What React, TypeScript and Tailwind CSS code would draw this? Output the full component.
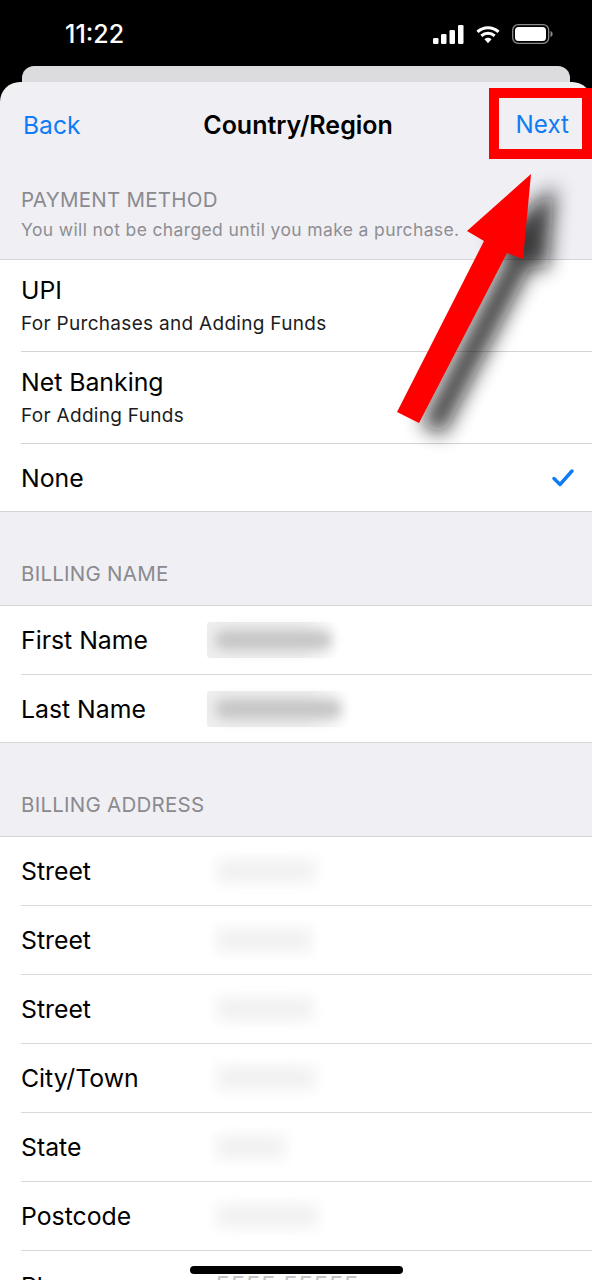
const FONT = "font-['Inter','Noto_Sans',sans-serif]"

function Blurred({ width, light }: { width: number; light?: boolean }) {
  if (light) {
    return (
      <div className="relative h-[34px] rounded-[6px] bg-[#fcfcfc] blur-[3px]" style={{ width }}>
        <div className="absolute inset-x-[6px] inset-y-[8px] rounded-full bg-[#efefef] blur-[6px]" />
      </div>
    )
  }
  return (
    <div className="relative h-[36px] rounded-[3px] bg-gradient-to-r from-[#eeeeee] from-70% to-white" style={{ width }}>
      <div className="absolute inset-x-[8px] inset-y-[8px] rounded-full bg-[#c6c6c6] blur-[6px]" />
    </div>
  )
}

function SectionHeader({ title, sub }: { title: string; sub?: string }) {
  return (
    <div className="px-[21px] border-b border-[#d4d4d8]">
      <div className="text-[20.5px] leading-[26px] text-[#8a8a8f] tracking-[0.25px]">{title}</div>
      {sub && <div className="mt-[6px] pb-[18px] text-[17.5px] leading-[22px] text-[#8e8e93] tracking-[0.37px]">{sub}</div>}
    </div>
  )
}

function DetailRow({ title, sub, checked, last }: { title: string; sub?: string; checked?: boolean; last?: boolean }) {
  return (
    <div className={`flex pl-[21px] bg-white ${sub ? 'h-[92px]' : 'h-[68px]'}`}>
      <div className={`flex-1 flex items-center justify-between pr-[18px] ${last ? 'border-b border-[#d4d4d8] -ml-[21px] pl-[21px]' : 'border-b border-[#d4d4d8]'}`}>
        <div className={sub ? '-mt-[2px]' : ''}>
          <div className="text-[24.8px] leading-[32px] text-black">{title}</div>
          {sub && <div className="mt-[6px] text-[19px] leading-[24px] text-[#1c1c1e] tracking-[0.3px]">{sub}</div>}
        </div>
        {checked && (
          <svg width="22" height="18" viewBox="0 0 22 18" fill="none">
            <path d="M2 9.5 L8 15.5 L20 2" stroke="#0f7cf5" strokeWidth="3.4" strokeLinecap="round" strokeLinejoin="round" />
          </svg>
        )}
      </div>
    </div>
  )
}

function FieldRow({ label, width, dark, last }: { label: string; width: number; dark?: boolean; last?: boolean }) {
  return (
    <div className={`flex bg-white ${last ? 'h-[68px]' : 'h-[69px] pl-[21px]'}`}>
      <div className={`flex-1 flex items-center border-b border-[#d9d9dc] ${last ? 'pl-[21px]' : ''}`}>
        <div className="w-[186px] text-[24.8px] leading-[32px] text-black">{label}</div>
        {dark ? (
          <Blurred width={width} />
        ) : (
          <div className="ml-[5px]">
            <Blurred width={width} light />
          </div>
        )}
      </div>
    </div>
  )
}

function StatusIcons() {
  return (
    <div className="flex items-center gap-[12px]">
      <svg width="31" height="19" viewBox="0 0 31 19" fill="white">
        <rect x="0" y="13" width="5.5" height="6" rx="1.3" />
        <rect x="8" y="9" width="5.5" height="10" rx="1.3" />
        <rect x="16.5" y="5" width="5.5" height="14" rx="1.3" />
        <rect x="25" y="0" width="5.5" height="19" rx="1.3" />
      </svg>
      <svg width="24" height="19" viewBox="0 0 25 19" fill="none" stroke="white" strokeWidth="3.2">
        <path d="M1.5 6.8 A16 16 0 0 1 23.5 6.8" />
        <path d="M5.6 11 A10 10 0 0 1 19.4 11" />
        <path d="M12.5 18.5 L8.8 14.4 A5.4 5.4 0 0 1 16.2 14.4 Z" fill="white" stroke="none" />
      </svg>
      <svg width="41" height="20" viewBox="0 0 41 20" fill="none">
        <rect x="0.7" y="0.7" width="36" height="18.6" rx="5.5" stroke="#8a8a8a" strokeWidth="1.3" />
        <rect x="3" y="3" width="31" height="14" rx="3.5" fill="white" />
        <path d="M38.5 7 C40 7.6 40.6 8.6 40.6 10 C40.6 11.4 40 12.4 38.5 13 Z" fill="#8a8a8a" />
      </svg>
    </div>
  )
}

function ArrowOverlay() {
  const points = '531,174 467,231 484,241 397,412 419,423 507,253 523,259'
  return (
    <svg className="absolute left-0 top-0 pointer-events-none" width="592" height="480" viewBox="0 0 592 480">
      <defs>
        <filter id="arrowBlur" x="-30%" y="-30%" width="160%" height="160%">
          <feGaussianBlur stdDeviation="10" />
        </filter>
      </defs>
      <polygon points={points} transform="translate(24 12)" fill="#111" opacity="0.8" filter="url(#arrowBlur)" />
      <polygon points={points} fill="#ff0000" />
    </svg>
  )
}

export default function App() {
  return (
    <div className={`relative w-[592px] h-[1280px] overflow-hidden bg-black ${FONT}`}>
      {/* Status bar */}
      <div className="h-[66px] flex items-start justify-between pl-[65px] pr-[39px] pt-[18px]">
        <span className="text-[25px] leading-[32px] font-medium text-white">11:22</span>
        <div className="pt-[6px]">
          <StatusIcons />
        </div>
      </div>

      {/* Card behind the sheet */}
      <div className="mx-[22px] h-[16px] rounded-t-[12px] bg-[#dcdcde]" />

      {/* Sheet */}
      <div className="bg-[#f0eff4] rounded-t-[20px] h-[1198px]">
        <div className="relative h-[86px] flex items-center justify-between pl-[23px] pr-[23px]">
          <span className="text-[24.6px] leading-[32px] text-[#0f7cf5]">Back</span>
          <span className="text-[25px] leading-[32px] font-semibold text-black">Country/Region</span>
          <span className="text-[24.2px] leading-[32px] text-[#0f7cf5]">Next</span>
        </div>

        <div className="pt-[19px]">
          <SectionHeader title="PAYMENT METHOD" sub="You will not be charged until you make a purchase." />
        </div>
        <DetailRow title="UPI" sub="For Purchases and Adding Funds" />
        <DetailRow title="Net Banking" sub="For Adding Funds" />
        <DetailRow title="None" checked last />

        <div className="pt-[49px] pb-[18px]">
          <div className="px-[21px] text-[20.5px] leading-[26px] text-[#8a8a8f] tracking-[0.25px]">BILLING NAME</div>
        </div>
        <div className="border-t border-[#d4d4d8]">
          <FieldRow label="First Name" width={133} dark />
          <FieldRow label="Last Name" width={143} dark last />
        </div>

        <div className="pt-[49px] pb-[18px]">
          <div className="px-[21px] text-[20.5px] leading-[26px] text-[#8a8a8f] tracking-[0.25px]">BILLING ADDRESS</div>
        </div>
        <div className="border-t border-[#d4d4d8]">
          <FieldRow label="Street" width={108} />
          <FieldRow label="Street" width={104} />
          <FieldRow label="Street" width={106} />
          <FieldRow label="City/Town" width={108} />
          <FieldRow label="State" width={78} />
          <FieldRow label="Postcode" width={110} />
          <div className="flex items-center pl-[21px] bg-white h-[69px]">
            <div className="w-[194px] text-[24.8px] leading-[32px] text-black">Phone</div>
            <span className="text-[25px] leading-[32px] text-[#c4c4c6]">5555 55555</span>
          </div>
        </div>
      </div>

      {/* Red annotation box */}
      <div className="absolute left-[489px] top-[88px] w-[103px] h-[71px] border-[10px] border-[#ff0000]" />
      <ArrowOverlay />

      {/* Home indicator */}
      <div className="absolute left-[190px] top-[1266px] w-[213px] h-[8px] rounded-full bg-black" />
    </div>
  )
}
